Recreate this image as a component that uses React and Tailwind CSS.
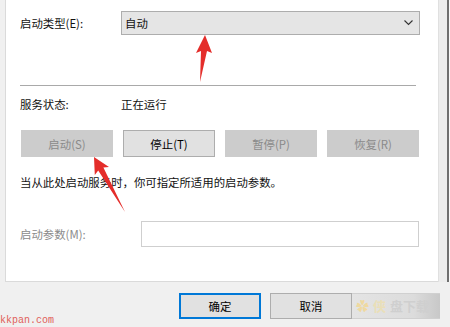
import React from 'react';

const Btn = ({ children, disabled, primary, className = '' }) => (
  <div
    className={`flex items-center justify-center border ${
      disabled
        ? 'bg-[#cccccc] border-[#cccccc] text-[#8a8a8a]'
        : primary
        ? 'bg-[#e1e1e1] border-[#0078d7] border-2 text-black'
        : 'bg-[#e1e1e1] border-[#adadad] text-black'
    } ${className}`}
  >
    {children}
  </div>
);

export default function App() {
  return (
    <div className="relative w-[450px] h-[327px] overflow-hidden bg-[#f0f0f0] font-['Noto_Sans_CJK_SC',sans-serif] text-[11.4px] leading-[16px] text-[#111]">
      <div className="flex h-[282px]">
        <div className="w-[5px]" />
        {/* main panel */}
        <div className="w-[433px] bg-white border-l border-b border-[#dadada] pl-[14px] flex flex-col">
          <div className="mt-[11px] flex items-center h-[24px]">
            <div className="w-[101px]">启动类型(E):</div>
            <div className="w-[299px] h-[24px] bg-[#e5e5e5] border border-[#adadad] flex items-center justify-between pl-[3px] pr-[6px]">
              <span>自动</span>
              <svg width="9" height="6" viewBox="0 0 9 6">
                <path d="M0.5 0.5 L4.5 4.5 L8.5 0.5" fill="none" stroke="#333" strokeWidth="1.1" />
              </svg>
            </div>
          </div>
          <div className="mt-[50px] w-[396px] h-px bg-[#a9a9a9]" />
          <div className="mt-[10px] flex h-[16px]">
            <div className="w-[101px]">服务状态:</div>
            <div>正在运行</div>
          </div>
          <div className="mt-[18px] ml-px flex gap-[10px] h-[27px]">
            <Btn disabled className="w-[92px]">启动(S)</Btn>
            <Btn className="w-[92px]">停止(T)</Btn>
            <Btn disabled className="w-[92px]">暂停(P)</Btn>
            <Btn disabled className="w-[92px]">恢复(R)</Btn>
          </div>
          <div className="mt-[17px]">当从此处启动服务时，你可指定所适用的启动参数。</div>
          <div className="mt-[31px] flex items-center h-[26px]">
            <div className="w-[121px] text-[#8a8a8a]">启动参数(M):</div>
            <div className="w-[278px] h-[26px] bg-white border border-[#cfcfcf]" />
          </div>
        </div>
        {/* window frame on the right */}
        <div className="w-[9px] bg-[#ececec] border-l border-[#e0e0e0]" />
        <div className="w-[2px] bg-[#6e6e6e]" />
        <div className="flex-1 bg-[#f7f7f7]" />
      </div>

      {/* bottom buttons */}
      <div className="mt-[11px] flex h-[26px] pl-[179px] gap-[9px]">
        <Btn primary className="w-[82px]">确定</Btn>
        <Btn className="w-[82px]">取消</Btn>
      </div>

      {/* watermark logo */}
      <div className="absolute left-[352px] top-[293px] w-[88px] h-[26px] bg-[linear-gradient(90deg,#e4e4e4,#dcdcdc_70%,#c8c8c8)] border-y border-[#d0d0d0] flex items-center gap-[4px] pl-[4px] font-bold text-[13px] text-[#cfcfcf]">
        <span className="text-[#efd9a0]">✿</span>
        <span className="text-[#eadfb8]">侠</span>
        <span>盘下载</span>
      </div>
      <div className="absolute left-0 top-[315px] font-['Liberation_Mono',monospace] text-[10px] leading-[12px] text-[#e0605a]">
        kkpan.com
      </div>

      {/* red arrows */}
      <svg className="absolute left-0 top-0 pointer-events-none" width="450" height="327">
        <polygon points="205,35 212,53 207,51 200,82 201,51 196,53" fill="#e42d2a" />
        <polygon points="94,157 109,167 103.4,167.5 125,212 98.2,170.5 94.8,175" fill="#e42d2a" />
      </svg>
    </div>
  );
}
